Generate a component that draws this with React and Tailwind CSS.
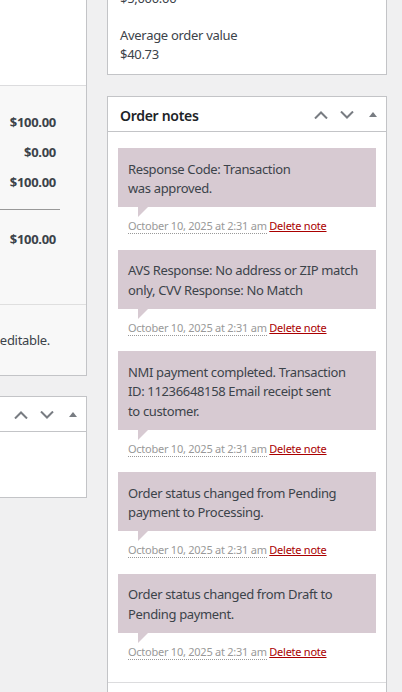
import React from 'react';

const notes = [
  { lines: ['Response Code: Transaction', 'was approved.'] },
  { lines: ['AVS Response: No address or ZIP match', 'only, CVV Response: No Match'] },
  { lines: ['NMI payment completed. Transaction', 'ID: 11236648158 Email receipt sent', 'to customer.'] },
  { lines: ['Order status changed from Pending', 'payment to Processing.'] },
  { lines: ['Order status changed from Draft to', 'Pending payment.'] },
];

function ChevronUp() {
  return (
    <svg width="14" height="8" viewBox="0 0 14 8" fill="none">
      <polyline points="1,7.5 7,1.5 13,7.5" stroke="#787c82" strokeWidth="2" />
    </svg>
  );
}

function ChevronDown() {
  return (
    <svg width="14" height="8" viewBox="0 0 14 8" fill="none">
      <polyline points="1,0.5 7,6.5 13,0.5" stroke="#787c82" strokeWidth="2" />
    </svg>
  );
}

function Toggle() {
  return (
    <svg width="8" height="5" viewBox="0 0 8 5">
      <polygon points="0,5 4,0 8,5" fill="#787c82" />
    </svg>
  );
}

function BoxControls() {
  return (
    <div className="flex items-center pt-px">
      <span className="flex w-[26px] justify-center"><ChevronUp /></span>
      <span className="flex w-[26px] justify-center"><ChevronDown /></span>
      <span className="flex w-[26px] justify-center"><Toggle /></span>
    </div>
  );
}

function Note({ lines }) {
  return (
    <li className="mb-[6px]">
      <div className="relative bg-[#d7cad2] px-[10px] pt-[11.5px] pb-[8.5px] text-[13px] leading-[19.5px] tracking-[-0.35px] text-[#3c434a]">
        {lines.map((l, i) => (
          <div key={i} className="whitespace-nowrap">{l}</div>
        ))}
        <span className="absolute left-[20px] bottom-[-10px] h-0 w-0 border-solid border-t-[10px] border-r-[10px] border-t-[#d7cad2] border-r-transparent" />
      </div>
      <p className="px-[10px] pt-[11px] pb-[9px] text-[11px] leading-[16.5px] tracking-[-0.25px] text-[#999] whitespace-nowrap">
        <span className="border-b border-dotted border-[#999]">October 10, 2025 at 2:31 am</span>{' '}
        <a href="#" className="text-[#a00] underline">Delete note</a>
      </p>
    </li>
  );
}

export default function App() {
  return (
    <div
      className="flex h-[692px] w-[402px] overflow-hidden bg-[#f0f0f1] text-[#3c434a]"
      style={{ fontFamily: '"Noto Sans", "Open Sans", sans-serif' }}
    >
      {/* left column, cut off */}
      <div className="flex w-[87px] shrink-0 flex-col">
        <div className="border-r border-b border-[#c3c4c7] bg-white">
          <div className="h-[86px] border-b border-[#dcdcde] bg-white" />
          <div className="h-[219px] border-b border-[#dfdfdf] bg-[#f8f8f8] pt-[22px]">
            <div className="flex h-[30px] items-center justify-end pr-[30px] text-[13px] font-bold tracking-[-0.3px] text-[#3c434a]">$100.00</div>
            <div className="flex h-[30px] items-center justify-end pr-[30px] text-[13px] font-bold tracking-[-0.3px] text-[#3c434a]">$0.00</div>
            <div className="flex h-[30px] items-center justify-end pr-[30px] text-[13px] font-bold tracking-[-0.3px] text-[#3c434a]">$100.00</div>
            <div className="mt-[11px] h-px w-[60px] bg-[#999]" />
            <div className="mt-[15px] flex h-[30px] items-center justify-end pr-[30px] text-[13px] font-bold tracking-[-0.3px] text-[#3c434a]">$100.00</div>
          </div>
          <div className="flex h-[70px] items-center justify-end overflow-hidden bg-[#f8f8f8] pt-[2px] pr-[36px] text-[13px] tracking-[-0.3px] whitespace-nowrap">
            This order is no longer editable.
          </div>
        </div>
        <div className="mt-[20px] border-t border-r border-b border-[#c3c4c7] bg-white">
          <div className="flex h-[35px] items-center justify-end border-b border-[#c3c4c7]">
            <BoxControls />
          </div>
          <div className="h-[65px]" />
        </div>
      </div>

      {/* right column */}
      <div className="ml-[20px] flex w-[280px] shrink-0 flex-col">
        <div className="mt-[-24px] border-x border-b border-[#c3c4c7] bg-white px-[12px] pt-[13px] pb-[10px] text-[13px] leading-[19px] tracking-[-0.3px]">
          <div>$5,000.00</div>
          <div className="mt-[18px]">Average order value</div>
          <div>$40.73</div>
        </div>

        <div className="mt-[21px] flex-1 border-x border-t border-[#c3c4c7] bg-white">
          <div className="flex h-[35px] items-center justify-between border-b border-[#c3c4c7] pl-[12px]">
            <h2 className="pt-[2px] text-[14px] font-semibold tracking-[-0.3px] text-[#1d2327]">Order notes</h2>
            <BoxControls />
          </div>
          <ul className="px-[10px] pt-[16px] pb-[7px]">
            {notes.map((n, i) => (
              <Note key={i} lines={n.lines} />
            ))}
          </ul>
          <div className="border-t border-[#dcdcde]" />
        </div>
      </div>
    </div>
  );
}
